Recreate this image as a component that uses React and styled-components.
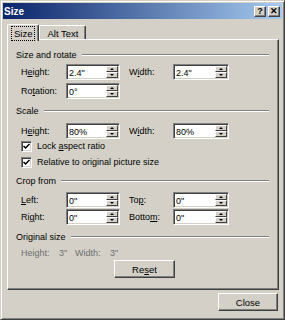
import styled, { createGlobalStyle } from 'styled-components';

const GlobalStyle = createGlobalStyle`
	html, body {
		margin: 0;
		padding: 0;
		background: #d4d0c8;
	}
	body {
		font-family: 'Liberation Sans', Arial, sans-serif;
		font-size: 9px;
		color: #000;
	}
`;

const Window = styled.div`
	box-sizing: border-box;
	width: 285px;
	height: 320px;
	background: #d4d0c8;
	border: 1px solid;
	border-color: #d4d0c8 #404040 #404040 #d4d0c8;
	box-shadow: inset 1px 1px #fff, inset -1px -1px #808080;
	padding: 2px;
	display: flex;
	flex-direction: column;
`;

const TitleBar = styled.div`
	height: 16px;
	display: flex;
	align-items: center;
	padding: 0 2px 0 1px;
	background: linear-gradient(to right, #0a246a, #a6caf0);
`;

const Title = styled.span`
	flex: 1;
	color: #fff;
	font-weight: bold;
	font-size: 10px;
`;

const TitleButton = styled.div`
	box-sizing: border-box;
	width: 12px;
	height: 11px;
	margin-left: 2px;
	background: #d4d0c8;
	border: 1px solid;
	border-color: #fff #404040 #404040 #fff;
	box-shadow: inset -1px -1px #808080;
	display: flex;
	align-items: center;
	justify-content: center;
	font-size: 9px;
	font-weight: bold;
	line-height: 1;
`;

const Body = styled.div`
	padding: 5px 3px 0 4px;
	display: flex;
	flex-direction: column;
`;

const TabRow = styled.div`
	display: flex;
	align-items: flex-end;
	height: 15px;
	position: relative;
	z-index: 1;
`;

const Tab = styled.div`
	box-sizing: border-box;
	height: ${(p) => (p.$active ? '17px' : '14px')};
	margin-bottom: ${(p) => (p.$active ? '-2px' : '0')};
	padding: 0 ${(p) => (p.$active ? '4px' : '5px')};
	background: #d4d0c8;
	border-top: 1px solid #fff;
	border-left: 1px solid #fff;
	border-right: 1px solid #404040;
	box-shadow: inset -1px 0 #808080;
	border-radius: 2px 2px 0 0;
	display: flex;
	align-items: center;
	font-size: 9.5px;
	padding-top: ${(p) => (p.$active ? '0' : '1px')};
`;

const TabLabel = styled.span`
	padding: 1px 2px;
	outline: ${(p) => (p.$focus ? '1px dotted #000' : 'none')};
`;

const Panel = styled.div`
	box-sizing: border-box;
	height: 251px;
	width: 272px;
	border: 1px solid;
	border-color: #fff #404040 #404040 #fff;
	box-shadow: inset -1px -1px #808080;
	padding: 9px 8px 0 8px;
`;

const SectionHeader = styled.div`
	display: flex;
	align-items: center;
	height: 12px;
	margin-top: ${(p) => p.$top || 0}px;
	margin-bottom: ${(p) => p.$bottom ?? 4}px;
	&::after {
		content: '';
		flex: 1;
		margin-left: 5px;
		margin-right: 1px;
		border-top: 1px solid #808080;
		border-bottom: 1px solid #fff;
	}
`;

const FieldRow = styled.div`
	display: grid;
	grid-template-columns: 45px 54px 9px 44px 56px;
	align-items: center;
	margin-left: 5px;
	margin-top: ${(p) => p.$top || 0}px;
`;

const Label = styled.span`
	grid-column: ${(p) => p.$col};
	white-space: nowrap;
`;

const SpinBox = styled.div`
	grid-column: ${(p) => p.$col};
	box-sizing: border-box;
	height: 16px;
	background: #fff;
	border: 1px solid;
	border-color: #808080 #fff #fff #808080;
	box-shadow: inset 1px 1px #404040, inset -1px -1px #d4d0c8;
	display: flex;
	align-items: stretch;
	padding: 1px;
`;

const SpinValue = styled.span`
	flex: 1;
	padding-left: 1px;
	line-height: 14px;
	font-size: 9px;
`;

const SpinButtons = styled.div`
	width: 12px;
	display: flex;
	flex-direction: column;
`;

const SpinButton = styled.div`
	flex: 1;
	box-sizing: border-box;
	background: #d4d0c8;
	border: 1px solid;
	border-color: #fff #404040 #404040 #fff;
	display: flex;
	align-items: center;
	justify-content: center;
	&::after {
		content: '';
		border-left: 2px solid transparent;
		border-right: 2px solid transparent;
		${(p) => (p.$down ? 'border-top: 2px solid #000;' : 'border-bottom: 2px solid #000;')}
	}
`;

const CheckRow = styled.label`
	display: flex;
	align-items: center;
	height: 12px;
	margin-left: 5px;
	margin-top: ${(p) => p.$top || 0}px;
`;

const CheckBox = styled.span`
	box-sizing: border-box;
	width: 11px;
	height: 11px;
	margin-right: 5px;
	background: #fff;
	border: 1px solid;
	border-color: #808080 #fff #fff #808080;
	box-shadow: inset 1px 1px #404040, inset -1px -1px #d4d0c8;
	display: flex;
	align-items: center;
	justify-content: center;
`;

const InfoRow = styled.div`
	display: flex;
	margin-left: 5px;
	margin-top: 4px;
	color: #6f6f6f;
	height: 12px;
	align-items: center;
	& > span:nth-child(1) { width: 38px; }
	& > span:nth-child(2) { width: 16px; }
	& > span:nth-child(3) { width: 35px; }
`;

const Button = styled.div`
	box-sizing: border-box;
	width: ${(p) => p.$w}px;
	height: 18px;
	background: #d4d0c8;
	border: 1px solid;
	border-color: #fff #404040 #404040 #fff;
	box-shadow: inset -1px -1px #808080;
	display: flex;
	align-items: center;
	justify-content: center;
	font-size: 9.5px;
`;

const ResetRow = styled.div`
	display: flex;
	padding-left: 98px;
	margin-top: 1px;
`;

const Footer = styled.div`
	display: flex;
	justify-content: flex-end;
	margin-top: 3px;
	padding-right: 1px;
`;

const U = styled.span`
	text-decoration: underline;
`;

const Spin = ({ col, value }) => (
	<SpinBox $col={col}>
		<SpinValue>{value}</SpinValue>
		<SpinButtons>
			<SpinButton />
			<SpinButton $down />
		</SpinButtons>
	</SpinBox>
);

const Check = () => (
	<CheckBox>
		<svg width='7' height='7' viewBox='0 0 7 7'>
			<path d='M0.5 3 L2.5 5 L6.5 1' fill='none' stroke='#000' strokeWidth='1.5' />
		</svg>
	</CheckBox>
);

const App = () => (
	<>
		<GlobalStyle />
		<Window>
			<TitleBar>
				<Title>Size</Title>
				<TitleButton>?</TitleButton>
				<TitleButton>✕</TitleButton>
			</TitleBar>
			<Body>
				<TabRow>
					<Tab $active>
						<TabLabel $focus>Size</TabLabel>
					</Tab>
					<Tab>
						<TabLabel>Alt Text</TabLabel>
					</Tab>
				</TabRow>
				<Panel>
					<SectionHeader $bottom={3}>Size and rotate</SectionHeader>
					<FieldRow>
						<Label $col={1}>H<U>e</U>ight:</Label>
						<Spin col={2} value='2.4"' />
						<Label $col={4}>W<U>i</U>dth:</Label>
						<Spin col={5} value='2.4"' />
					</FieldRow>
					<FieldRow $top={3}>
						<Label $col={1}>Ro<U>t</U>ation:</Label>
						<Spin col={2} value='0°' />
					</FieldRow>

					<SectionHeader $top={6} $bottom={6}>Scale</SectionHeader>
					<FieldRow>
						<Label $col={1}>H<U>e</U>ight:</Label>
						<Spin col={2} value='80%' />
						<Label $col={4}>W<U>i</U>dth:</Label>
						<Spin col={5} value='80%' />
					</FieldRow>
					<CheckRow $top={1}>
						<Check />
						<span>Lock <U>a</U>spect ratio</span>
					</CheckRow>
					<CheckRow $top={4}>
						<Check />
						<span>Relative to original picture size</span>
					</CheckRow>

					<SectionHeader $top={7} $bottom={5}>Crop from</SectionHeader>
					<FieldRow>
						<Label $col={1}><U>L</U>eft:</Label>
						<Spin col={2} value='0"' />
						<Label $col={4}>To<U>p</U>:</Label>
						<Spin col={5} value='0"' />
					</FieldRow>
					<FieldRow $top={1}>
						<Label $col={1}>Ri<U>g</U>ht:</Label>
						<Spin col={2} value='0"' />
						<Label $col={4}>Botto<U>m</U>:</Label>
						<Spin col={5} value='0"' />
					</FieldRow>

					<SectionHeader $top={6} $bottom={0}>Original size</SectionHeader>
					<InfoRow>
						<span>Height:</span>
						<span>3"</span>
						<span>Width:</span>
						<span>3"</span>
					</InfoRow>
					<ResetRow>
						<Button $w={61}>
							<span>Re<U>s</U>et</span>
						</Button>
					</ResetRow>
				</Panel>
				<Footer>
					<Button $w={60}>Close</Button>
				</Footer>
			</Body>
		</Window>
	</>
);

export default App;
